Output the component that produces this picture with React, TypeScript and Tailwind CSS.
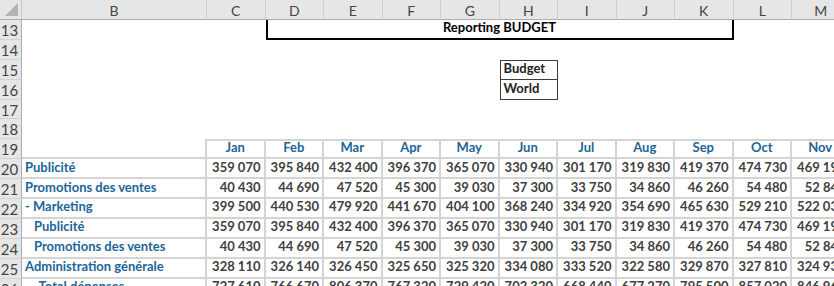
import { FC, ReactNode } from 'react';

const months = ['Jan', 'Feb', 'Mar', 'Apr', 'May', 'Jun', 'Jul', 'Aug', 'Sep', 'Oct', 'Nov'];
const colLetters = ['B', 'C', 'D', 'E', 'F', 'G', 'H', 'I', 'J', 'K', 'L', 'M'];

const pub = ['359 070', '395 840', '432 400', '396 370', '365 070', '330 940', '301 170', '319 830', '419 370', '474 730', '469 190'];
const promo = ['40 430', '44 690', '47 520', '45 300', '39 030', '37 300', '33 750', '34 860', '46 260', '54 480', '52 840'];

const dataRows = [
  { n: 20, label: 'Publicité', indent: false, values: pub },
  { n: 21, label: 'Promotions des ventes', indent: false, values: promo },
  {
    n: 22,
    label: '- Marketing',
    indent: false,
    values: ['399 500', '440 530', '479 920', '441 670', '404 100', '368 240', '334 920', '354 690', '465 630', '529 210', '522 030'],
  },
  { n: 23, label: 'Publicité', indent: true, values: pub },
  { n: 24, label: 'Promotions des ventes', indent: true, values: promo },
  {
    n: 25,
    label: 'Administration générale',
    indent: false,
    values: ['328 110', '326 140', '326 450', '325 650', '325 320', '334 080', '333 520', '322 580', '329 870', '327 810', '324 930'],
  },
  {
    n: 26,
    label: '- Total dépenses',
    indent: false,
    values: ['727 610', '766 670', '806 370', '767 320', '729 420', '702 320', '668 440', '677 270', '795 500', '857 020', '846 960'],
  },
];

const RowHead: FC<{ n: number }> = ({ n }) => (
  <div className="bg-[#e6e6e6] border-r border-r-[#acacac] border-b border-b-[#d2d2d2] text-[15px] text-[#444] leading-none flex items-center justify-center pr-[2px] pt-[2px]">
    {n}
  </div>
);

const Blank: FC<{ children?: ReactNode; className?: string }> = ({ children, className }) => (
  <div className={className}>{children}</div>
);

export default function App() {
  return (
    <div className="w-[834px] h-[286px] overflow-hidden bg-white font-['Lato','Liberation_Sans',sans-serif]">
      <div className="grid grid-cols-[22px_185px_repeat(11,58.5px)] grid-rows-[20px_repeat(14,19.9px)] w-max">
        {/* column headers */}
        <div className="bg-[#e6e6e6] border-r border-r-[#c8c8c8] border-b border-b-[#acacac] relative">
          <div className="absolute right-[3px] bottom-[3px] w-0 h-0 border-l-[13px] border-l-transparent border-b-[13px] border-b-[#b4b4b4]" />
        </div>
        {colLetters.map((c) => (
          <div
            key={c}
            className="bg-[#e6e6e6] border-r border-r-[#cfcfcf] border-b border-b-[#acacac] text-[14px] text-[#444] flex items-center justify-center pt-[1px]"
          >
            {c}
          </div>
        ))}

        {/* row 13 */}
        <RowHead n={13} />
        <Blank />
        <Blank />
        <div className="col-span-8 border-2 border-t-0 border-black flex items-end justify-center text-[13px] font-bold text-black">
          Reporting BUDGET
        </div>
        <Blank />
        <Blank />

        {/* row 14 */}
        <RowHead n={14} />
        <div className="col-span-12" />

        {/* rows 15-16 */}
        {[
          { n: 15, t: 'Budget' },
          { n: 16, t: 'World' },
        ].map((r) => (
          <div key={r.n} className="contents">
            <RowHead n={r.n} />
            <div className="col-span-6" />
            <div
              className={`border border-[#3c3c3c] ${r.n === 16 ? 'border-t-0' : ''} flex items-end pl-[3px] text-[13px] font-bold text-[#222]`}
            >
              {r.t}
            </div>
            <div className="col-span-5" />
          </div>
        ))}

        {/* rows 17-18 */}
        <RowHead n={17} />
        <div className="col-span-12" />
        <RowHead n={18} />
        <div className="col-span-12" />

        {/* row 19 month headers */}
        <RowHead n={19} />
        <div className="border-r-2 border-r-[#d4d4d4] border-b-2 border-b-[#d4d4d4]" />
        {months.map((m) => (
          <div
            key={m}
            className="border-t-2 border-t-[#d4d4d4] border-r-2 border-r-[#d4d4d4] border-b-2 border-b-[#d4d4d4] flex items-end justify-center text-[13px] font-bold text-[#1d6597]"
          >
            {m}
          </div>
        ))}

        {/* data rows */}
        {dataRows.map((r) => (
          <div key={r.n} className="contents">
            <RowHead n={r.n} />
            <div
              className={`border-r-2 border-r-[#d4d4d4] border-b-2 border-b-[#d4d4d4] flex items-end whitespace-nowrap text-[13px] font-bold text-[#1d6597] ${
                r.indent ? 'pl-[12px]' : r.n === 26 ? 'pl-[9px]' : 'pl-[3px]'
              }`}
            >
              {r.label}
            </div>
            {r.values.map((v, i) => (
              <div
                key={i}
                className="border-r-2 border-r-[#d4d4d4] border-b-2 border-b-[#d4d4d4] flex items-end justify-end pr-[3px] whitespace-nowrap text-[13px] font-bold text-[#404040]"
              >
                {v}
              </div>
            ))}
          </div>
        ))}
      </div>
    </div>
  );
}
